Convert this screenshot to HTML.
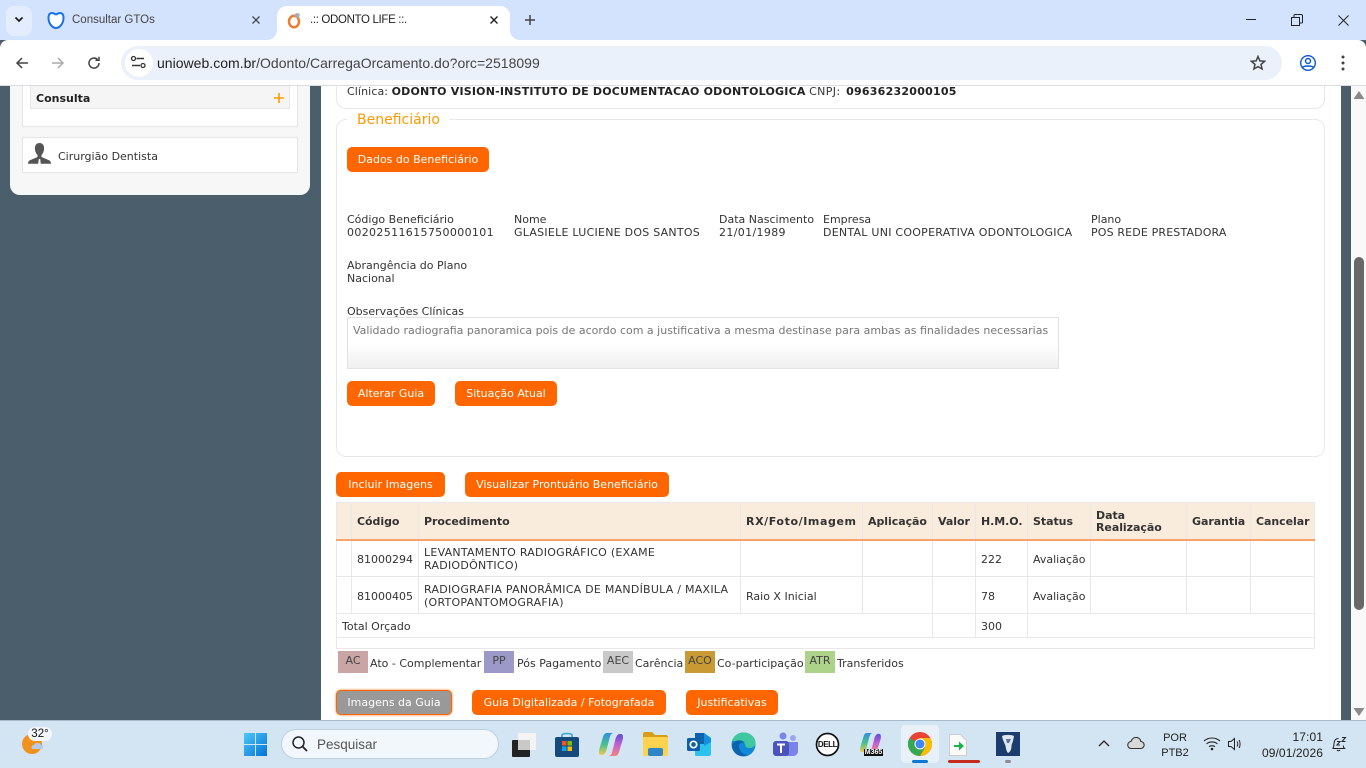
<!DOCTYPE html>
<html lang="pt-BR"><head><meta charset="utf-8"><title>.:: ODONTO LIFE ::.</title>
<style>
html,body{margin:0;padding:0;width:1366px;height:768px;overflow:hidden;background:#4a5e6c}
body{position:relative;font-family:"DejaVu Sans",Verdana,sans-serif;font-size:11px;color:#333}
.a{position:absolute;white-space:nowrap}
.t{position:absolute;white-space:nowrap;line-height:13px}
.u{letter-spacing:.25px}
.n{letter-spacing:.35px}
.b{position:absolute;height:25px;line-height:26px;background:#f60;color:#fff;border-radius:5px;text-align:center}
.box{position:absolute;box-sizing:border-box}
.c{font-family:"Liberation Sans",Arial,sans-serif}
table{position:absolute;left:336px;top:502px;width:979px;border-collapse:collapse;table-layout:fixed;font-size:11px;line-height:13px}
td,th{border:1px solid #e8e8e8;padding:2px 5px 0;text-align:left;vertical-align:middle;box-sizing:border-box;overflow:hidden}
th{background:#faecdc;font-weight:bold;border-bottom:2px solid #f7a26b;white-space:nowrap;height:37px;letter-spacing:-.05px;padding-top:3px;line-height:12px}
.s{position:absolute;top:651px;width:30px;height:22px;text-align:center;line-height:19px;color:#444}
</style></head><body>

<!-- page -->
<div class="box" style="left:10px;top:86px;width:300px;height:109px;background:#f7f7f7;border-radius:0 0 10px 10px"></div>
<div class="box" style="left:22px;top:80px;width:276px;height:47px;background:#fff;border:1px solid #e6e6e6"></div>
<div class="box" style="left:30px;top:80px;width:260px;height:29px;background:#f5f5f5;border:1px solid #e6e6e6"></div>
<div class="t" style="left:36px;top:92px;font-weight:bold;color:#222">Consulta</div>
<svg class="a" style="left:273px;top:92px" width="12" height="12"><path d="M6 1v10M1 6h10" stroke="#f90" stroke-width="1.6"/></svg>
<div class="box" style="left:22px;top:137px;width:276px;height:36px;background:#fff;border:1px solid #e6e6e6"></div>
<svg class="a" style="left:27px;top:142px" width="25" height="25" viewBox="0 0 25 25"><path d="M12.5 1c3 0 4.600 2.200 4.600 5.200 0 3-1.400 5.800-2.600 6.800v2l7 3c1.500.7 2.500 1.600 2.500 3.800H1c0-2.200 1-3.100 2.500-3.800l7-3v-2C9.300 12 7.900 9.200 7.900 6.200 7.900 3.200 9.500 1 12.500 1z" fill="#555"/><path d="M11.800 17h1.400l.6 5-1.300 2-1.300-2z" fill="#fff"/></svg>
<div class="t" style="left:58px;top:150px">Cirurgião Dentista</div>

<div class="box" style="left:321px;top:80px;width:1020px;height:640px;background:#fff"></div>
<div class="box" style="left:336px;top:70px;width:989px;height:39px;border:1px solid #e8e8e8;border-radius:10px"></div>
<div class="t" style="left:347px;top:85px"><span style="letter-spacing:.1px">Clínica:</span> <b style="color:#222;letter-spacing:.2px">ODONTO VISION-INSTITUTO DE DOCUMENTACAO ODONTOLOGICA</b> <span style="letter-spacing:.4px">CNPJ:</span> <b style="color:#222;letter-spacing:.25px;margin-left:2px">09636232000105</b></div>

<div class="box" style="left:336px;top:119px;width:989px;height:338px;border:1px solid #e8e8e8;border-radius:10px"></div>
<div class="a" style="left:347px;top:110px;width:102px;height:18px;background:#fff"></div>
<div class="t" style="left:357px;top:112px;font-size:14px;line-height:16px;color:#f90">Beneficiário</div>
<div class="b" style="left:347px;top:147px;width:142px">Dados do Beneficiário</div>

<div class="t" style="left:347px;top:213px">Código Beneficiário<br><span class="n">00202511615750000101</span></div>
<div class="t" style="left:514px;top:213px">Nome<br><span class="u">GLASIELE LUCIENE DOS SANTOS</span></div>
<div class="t" style="left:719px;top:213px">Data Nascimento<br><span class="n">21/01/1989</span></div>
<div class="t" style="left:823px;top:213px">Empresa<br><span class="u">DENTAL UNI COOPERATIVA ODONTOLOGICA</span></div>
<div class="t" style="left:1091px;top:213px">Plano<br><span style="letter-spacing:.15px">POS REDE PRESTADORA</span></div>
<div class="t" style="left:347px;top:259px">Abrangência do Plano<br>Nacional</div>
<div class="t" style="left:347px;top:305px">Observações Clínicas</div>
<div class="box" style="left:347px;top:317px;width:712px;height:52px;border:1px solid #e2e2e2;background:linear-gradient(#fff 50%,#f0f0f0)"></div>
<div class="t" style="left:353px;top:324px;color:#777">Validado radiografia panoramica pois de acordo com a justificativa a mesma destinase para ambas as finalidades necessarias</div>
<div class="b" style="left:347px;top:381px;width:88px">Alterar Guia</div>
<div class="b" style="left:455px;top:381px;width:102px">Situação Atual</div>

<div class="b" style="left:336px;top:472px;width:109px">Incluir Imagens</div>
<div class="b" style="left:465px;top:472px;width:204px">Visualizar Prontuário Beneficiário</div>

<table>
<colgroup><col style="width:15px"><col style="width:67px"><col style="width:322px"><col style="width:122px"><col style="width:70px"><col style="width:43px"><col style="width:52px"><col style="width:63px"><col style="width:96px"><col style="width:64px"><col style="width:64px"></colgroup>
<tr><th></th><th>Código</th><th>Procedimento</th><th><span style="letter-spacing:.6px">RX/Foto/Imagem</span></th><th>Aplicação</th><th>Valor</th><th>H.M.O.</th><th>Status</th><th>Data<br>Realização</th><th>Garantia</th><th>Cancelar</th></tr>
<tr style="height:37px"><td></td><td>81000294</td><td class="u">LEVANTAMENTO RADIOGRÁFICO (EXAME RADIODÔNTICO)</td><td></td><td></td><td></td><td>222</td><td>Avaliação</td><td></td><td></td><td></td></tr>
<tr style="height:37px"><td></td><td>81000405</td><td class="u">RADIOGRAFIA PANORÂMICA DE MANDÍBULA / MAXILA (ORTOPANTOMOGRAFIA)</td><td>Raio X Inicial</td><td></td><td></td><td>78</td><td>Avaliação</td><td></td><td></td><td></td></tr>
<tr style="height:24px"><td colspan="5">Total Orçado</td><td></td><td>300</td><td colspan="4"></td></tr>
<tr style="height:11px"><td colspan="11" style="font-size:1px;line-height:1px;padding:0"></td></tr>
</table>

<div class="s" style="left:338px;background:#c9a5a5">AC</div>
<div class="t" style="left:370px;top:657px">Ato - Complementar</div>
<div class="s" style="left:484px;background:#9c99c9">PP</div>
<div class="t" style="left:517px;top:657px">Pós Pagamento</div>
<div class="s" style="left:603px;background:#c9c9c9">AEC</div>
<div class="t" style="left:635px;top:657px">Carência</div>
<div class="s" style="left:685px;background:#c99933">ACO</div>
<div class="t" style="left:717px;top:657px">Co-participação</div>
<div class="s" style="left:805px;background:#add28a">ATR</div>
<div class="t" style="left:837px;top:657px">Transferidos</div>

<div class="b" style="left:336px;top:690px;width:116px;background:#999;box-shadow:0 0 0 1px #f60 inset,0 0 2px #f60">Imagens da Guia</div>
<div class="b" style="left:472px;top:690px;width:194px">Guia Digitalizada / Fotografada</div>
<div class="b" style="left:686px;top:690px;width:92px">Justificativas</div>

<!-- page scrollbar -->
<div class="box" style="left:1351px;top:86px;width:15px;height:634px;background:#f9f9f9"></div>
<div class="box" style="left:1354px;top:257px;width:10px;height:353px;background:#686868;border-radius:5px"></div>
<svg class="a" style="left:1353px;top:91px" width="12" height="9"><path d="M6 0l5.500 8H.5z" fill="#8a8a8a"/></svg>
<svg class="a" style="left:1353px;top:708px" width="12" height="9"><path d="M.5 0h11L6 8z" fill="#8a8a8a"/></svg>

<!-- browser chrome -->
<div class="box" style="left:0;top:0;width:1366px;height:40px;background:#d3e3fd"></div>
<div class="box" style="left:0;top:40px;width:1366px;height:46px;background:#fff;border-radius:8px 8px 0 0;border-bottom:1px solid #dadce0"></div>
<div class="box" style="left:6px;top:6px;width:26px;height:30px;background:#e3edfd;border-radius:8px"></div>
<svg class="a" style="left:14px;top:16px" width="10" height="8"><path d="M1.500 1.500L5 5l3.500-3.500" fill="none" stroke="#1f1f1f" stroke-width="1.800"/></svg>
<svg class="a" style="left:47px;top:11px" width="18" height="19" viewBox="0 0 18 19"><path d="M5 2c1.500 0 2.800.8 4 1.500C10.200 2.800 11.500 2 13 2c2.500 0 3.500 2 3.500 5 0 5-3.500 10-7.500 10S1.500 12 1.500 7c0-3 1-5 3.500-5z" fill="#fff" stroke="#1a73e8" stroke-width="2"/></svg>
<div class="a c" style="left:72px;top:13px;font-size:11.500px;line-height:15px;color:#444">Consultar GTOs</div>
<svg class="a" style="left:251px;top:15px" width="10" height="10"><path d="M1.500 1.500l7 7M8.500 1.500l-7 7" stroke="#444" stroke-width="1.300"/></svg>
<div class="box" style="left:277px;top:6px;width:233px;height:36px;background:#fff;border-radius:10px 10px 0 0"></div>
<svg class="a" style="left:267px;top:30px" width="10" height="10"><path d="M0 10a10 10 0 0 0 10-10v10z" fill="#fff"/></svg>
<svg class="a" style="left:510px;top:30px" width="10" height="10"><path d="M0 0a10 10 0 0 0 10 10H0z" fill="#fff"/></svg>
<svg class="a" style="left:285px;top:11px" width="18" height="18" viewBox="0 0 18 18"><ellipse cx="9" cy="10.500" rx="5" ry="5.800" fill="none" stroke="#ee7d31" stroke-width="2.500"/><path d="M9 4.500C10 2 13 1.500 14.500 3c.8 1.500-.5 3.500-2 4.500" fill="#aaa"/></svg>
<div class="a c" style="left:310px;top:13px;font-size:11.500px;line-height:15px;color:#1f1f1f;letter-spacing:-.34px">.:: ODONTO LIFE ::.</div>
<svg class="a" style="left:489px;top:15px" width="10" height="10"><path d="M1.500 1.500l7 7M8.500 1.500l-7 7" stroke="#1f1f1f" stroke-width="1.400"/></svg>
<svg class="a" style="left:524px;top:14px" width="12" height="12"><path d="M6 1v10M1 6h10" stroke="#444" stroke-width="1.500"/></svg>

<svg class="a" style="left:14px;top:55px" width="16" height="16"><path d="M14 8H3M8 3L3 8l5 5" fill="none" stroke="#444" stroke-width="1.500"/></svg>
<svg class="a" style="left:50px;top:55px" width="16" height="16"><path d="M2 8h11M8 3l5 5-5 5" fill="none" stroke="#aaa" stroke-width="1.500"/></svg>
<svg class="a" style="left:86px;top:55px" width="16" height="16"><path d="M13 8a5 5 0 1 1-1.500-3.500M13 1.800v3.500H9.500" fill="none" stroke="#444" stroke-width="1.500"/></svg>
<div class="box" style="left:121px;top:46px;width:1161px;height:34px;background:#ebf1fa;border-radius:17px"></div>
<div class="box" style="left:125px;top:49px;width:28px;height:28px;background:#fff;border-radius:14px"></div>
<svg class="a" style="left:130px;top:54px" width="17" height="17" viewBox="0 0 17 17"><path d="M6.500 4.500H14M2 11.500h8" stroke="#333" stroke-width="1.400"/><circle cx="3.500" cy="4.500" r="2" fill="none" stroke="#333" stroke-width="1.300"/><circle cx="13" cy="11.500" r="2" fill="none" stroke="#333" stroke-width="1.300"/></svg>
<div class="a c" style="left:157px;top:55px;font-size:14px;line-height:16px;color:#444;letter-spacing:.02px"><span style="color:#1f1f1f">unioweb.com.br</span>/Odonto/CarregaOrcamento.do?orc=2518099</div>
<svg class="a" style="left:1250px;top:55px" width="16" height="16" viewBox="0 0 16 16"><path d="M8 1.500l1.900 4.400 4.700.4-3.600 3.100 1.100 4.600L8 11.600l-4.100 2.400L5 9.400 1.400 6.300l4.700-.4z" fill="none" stroke="#444" stroke-width="1.500"/></svg>
<svg class="a" style="left:1299px;top:54px" width="18" height="18" viewBox="0 0 18 18"><circle cx="9" cy="9" r="7.300" fill="none" stroke="#0b57d0" stroke-width="1.400"/><circle cx="9" cy="7" r="2.500" fill="none" stroke="#0b57d0" stroke-width="1.400"/><path d="M3.500 13.500c1.500-2 9.500-2 11 0" fill="none" stroke="#0b57d0" stroke-width="1.400"/></svg>
<svg class="a" style="left:1341px;top:55px" width="4" height="16"><circle cx="2" cy="2" r="1.500" fill="#444"/><circle cx="2" cy="8" r="1.500" fill="#444"/><circle cx="2" cy="14" r="1.500" fill="#444"/></svg>
<svg class="a" style="left:1246px;top:15px" width="11" height="11"><path d="M0 4.500h10" stroke="#222" stroke-width="1"/></svg>
<svg class="a" style="left:1291px;top:14px" width="12" height="12"><path d="M.5 3.500h8v8h-8zM3 3V1.500C3 1 3.500.5 4 .5h6c1 0 1.500.5 1.500 1.500v6c0 .5-.5 1-1 1H9" fill="none" stroke="#222"/></svg>
<svg class="a" style="left:1338px;top:15px" width="11" height="11"><path d="M.5.500l10 10M10.500.5l-10 10" stroke="#222"/></svg>

<!-- taskbar -->
<div class="box" style="left:0;top:720px;width:1366px;height:48px;background:#d3e5f2;border-top:1px solid #a7bbcc"></div>
<svg class="a" style="left:20px;top:726px" width="36" height="32" viewBox="0 0 36 32"><circle cx="12" cy="18" r="10" fill="#f0921e"/><path d="M14 19c1-3 6-3 7 0 3 0 3 4 0 4h-8c-2 0-2-4 1-4z" fill="#b5cbe6"/></svg>
<div class="a c" style="left:28px;top:727px;width:24px;height:14px;background:#f3f7fb;border-radius:7px;font-size:11.500px;line-height:14px;text-align:center;color:#111">32°</div>
<svg class="a" style="left:244px;top:733px" width="23" height="23"><defs><linearGradient id="w" x1="0" y1="0" x2="1" y2="1"><stop offset="0" stop-color="#4fc8fb"/><stop offset="1" stop-color="#0273d4"/></linearGradient><linearGradient id="cl" x1="0" y1="0" x2="0" y2="1"><stop offset="0" stop-color="#2d8fe0"/><stop offset=".55" stop-color="#4cc38a"/><stop offset="1" stop-color="#f4c84a"/></linearGradient><linearGradient id="cr" x1="0" y1="0" x2="0" y2="1"><stop offset="0" stop-color="#5a4fd6"/><stop offset=".5" stop-color="#c562d0"/><stop offset="1" stop-color="#f4847a"/></linearGradient></defs><path d="M0 0h11v11H0zM12 0h11v11H12zM0 12h11v11H0zM12 12h11v11H12z" fill="url(#w)"/></svg>
<div class="box" style="left:281px;top:729px;width:218px;height:30px;background:#f2f7fc;border:1px solid #bdd0e0;border-radius:15px"></div>
<svg class="a" style="left:291px;top:735px" width="17" height="17"><circle cx="7.500" cy="7.500" r="5.500" fill="none" stroke="#222" stroke-width="1.500"/><path d="M11.500 11.500l4.500 4.500" stroke="#222" stroke-width="1.800"/></svg>
<div class="a c" style="left:317px;top:737px;font-size:13.500px;line-height:16px;color:#555">Pesquisar</div>

<svg class="a" style="left:512px;top:733px" width="24" height="24"><rect x="6" y="0" width="18" height="17" rx="1" fill="#f4f4f4"/><rect x="0" y="7" width="18" height="17" rx="1" fill="#222"/><rect x="6" y="7" width="12" height="10" fill="#c9c9c9"/></svg>
<svg class="a" style="left:555px;top:732px" width="24" height="25"><path d="M7 6V3c0-2 10-2 10 0v3" fill="none" stroke="#38a5d8" stroke-width="1.600"/><rect y="5" width="24" height="20" rx="2" fill="#164a7c"/><path d="M7 9h4.500v4.500H7z" fill="#f35325"/><path d="M12.500 9H17v4.500h-4.500z" fill="#81bc06"/><path d="M7 14.500h4.500V19H7z" fill="#05a6f0"/><path d="M12.500 14.500H17V19h-4.500z" fill="#ffba08"/></svg>
<svg class="a" style="left:599px;top:733px" width="24" height="23" viewBox="0 0 24 23"><path d="M8 0h6.500c-2 .3-3 1.500-3.500 3.500L8 15c-.7 4-2.500 7-5 7H2c-2 0-2.500-3-1.500-6.500L4 4c.7-2.500 2-4 4-4z" fill="url(#cl)"/><path d="M16 23H9.500c2-.3 3-1.500 3.500-3.500L16 8c.7-4 2.500-7 5-7h1c2 0 2.500 3 1.500 6.500L20 19c-.7 2.500-2 4-4 4z" fill="url(#cr)"/></svg>
<svg class="a" style="left:643px;top:732px" width="25" height="24"><path d="M0 2c0-1 .5-2 2-2h7l3 3h11c1 0 2 1 2 2v4H0z" fill="#d49e17"/><rect y="5" width="25" height="19" rx="1.500" fill="#fcd34f"/><rect x="5" y="16" width="15" height="8" rx="2" fill="#2f85c6"/></svg>
<svg class="a" style="left:687px;top:732px" width="24" height="24"><path d="M8 1h9l7 5v16c0 1-1 2-2 2H9c-1 0-1-1-1-2z" fill="#2bc3ee"/><path d="M8 1h9v11H8z" fill="#0a64ad"/><path d="M17 1l7 5v4l-7 4z" fill="#1490df"/><rect y="6" width="13" height="13" rx="1.500" fill="#0f5fa8"/><circle cx="6.500" cy="12.500" r="3.200" fill="none" stroke="#fff" stroke-width="1.700"/></svg>
<svg class="a" style="left:731px;top:732px" width="25" height="25" viewBox="0 0 25 25"><circle cx="12.500" cy="12.500" r="12" fill="#1089d6"/><path d="M1 9C3 2 10 .5 13 .5c7 0 11.500 5.500 11.500 10 0 4-3 5.500-6 5.500-3.500 0-5-2-4-4-3-2-7-3-13.500-3z" fill="#3fc7a0"/><path d="M8 14c0 5 4 9 9 9-8 3-15-1-16-9 0-5 9-8 13-3-3-1-6 0-6 3z" fill="#0c62ad"/></svg>
<svg class="a" style="left:773px;top:732px" width="25" height="25"><circle cx="10" cy="4" r="3.500" fill="#7b83eb"/><circle cx="20" cy="6" r="3" fill="#9ea4f0"/><path d="M14 10h11v9c0 3-2 5-5 5h-6z" fill="#7b83eb"/><rect y="9" width="16" height="15" rx="3" fill="#4b53bc"/><path d="M4 12.500h8M8 12.500V21" stroke="#fff" stroke-width="2"/></svg>
<svg class="a" style="left:815px;top:732px" width="25" height="25"><circle cx="12.500" cy="12.500" r="11" fill="#fff" stroke="#111" stroke-width="1.700"/></svg>
<div class="a c" style="left:815px;top:740px;width:25px;text-align:center;font-size:8px;line-height:9px;font-weight:bold;color:#111;letter-spacing:-.4px">DELL</div>
<svg class="a" style="left:859px;top:733px" width="23" height="20" viewBox="0 0 24 23"><path d="M8 0h6.500c-2 .3-3 1.500-3.500 3.500L8 15c-.7 4-2.500 7-5 7H2c-2 0-2.500-3-1.500-6.500L4 4c.7-2.500 2-4 4-4z" fill="url(#cl)"/><path d="M16 23H9.500c2-.3 3-1.500 3.500-3.500L16 8c.7-4 2.500-7 5-7h1c2 0 2.500 3 1.500 6.500L20 19c-.7 2.500-2 4-4 4z" fill="url(#cr)"/></svg>
<div class="a c" style="left:864px;top:749px;width:19px;height:7px;background:#111;color:#fff;font-size:7px;line-height:7px;font-weight:bold;text-align:center">M365</div>

<div class="box" style="left:901px;top:725px;width:38px;height:38px;background:#e8f0f8;border-radius:4px"></div>
<svg class="a" style="left:908px;top:732px" width="24" height="24" viewBox="0 0 24 24"><circle cx="12" cy="12" r="12" fill="#ea4335"/><path d="M12 12L1.600 6A12 12 0 0 0 12 24l5.200-9z" fill="#34a853"/><path d="M12 6h10.400A12 12 0 0 1 12 24l5.200-9z" fill="#fbbc04"/><circle cx="12" cy="12" r="5.500" fill="#fff"/><circle cx="12" cy="12" r="4.500" fill="#4285f4"/></svg>
<div class="box" style="left:912px;top:760px;width:16px;height:3px;background:#0a78d4;border-radius:2px"></div>
<svg class="a" style="left:949px;top:734px" width="18" height="22"><path d="M.5.500h11l6 6v15H.5z" fill="#fafafa" stroke="#ccc"/><path d="M5 11h5V7.500l5 4.500-5 4.500V13H5z" fill="#19b24b"/></svg>
<div class="box" style="left:948px;top:760px;width:32px;height:3px;background:#c42b1c;border-radius:2px"></div>
<svg class="a" style="left:996px;top:732px" width="24" height="24"><rect width="24" height="24" fill="#1d3c6e"/><path d="M6 4c3-1.500 9-1.500 12 0l-1 5c-.5 2-1.500 3-1.500 5 0 3-1 6-3.500 7-1.500-1.500-2-4-2.500-7-.5-2-3-6-3.500-10z" fill="#dfe6ee"/><path d="M10 7h5l-2 4h-2z" fill="#5c7496"/></svg>
<div class="box" style="left:1005px;top:760px;width:6px;height:3px;background:#8a8f96;border-radius:2px"></div>

<svg class="a" style="left:1098px;top:739px" width="12" height="9"><path d="M1 7l5-5 5 5" fill="none" stroke="#222" stroke-width="1.300"/></svg>
<svg class="a" style="left:1127px;top:736px" width="18" height="14"><path d="M4.500 12.500a3.500 3.500 0 0 1-.5-7C5 2.500 7.500 1 10 1.500c2 .4 3.500 2 3.800 4a3.500 3.500 0 0 1-.3 7z" fill="#d9d9d9" stroke="#333" stroke-width="1.100"/></svg>
<div class="a c" style="left:1155px;top:731px;width:40px;text-align:center;font-size:11px;line-height:15px;color:#222">POR<br>PTB2</div>
<svg class="a" style="left:1203px;top:736px" width="18" height="15" viewBox="0 0 18 15"><path d="M1 5c4.500-4 11.500-4 16 0M3.500 8c3-2.700 8-2.700 11 0M6 10.700c1.700-1.300 4.300-1.300 6 0" fill="none" stroke="#222" stroke-width="1.100"/><circle cx="9" cy="13" r="1.300" fill="#222"/></svg>
<svg class="a" style="left:1228px;top:737px" width="16" height="14" viewBox="0 0 16 14"><path d="M.5 4.500h2.500L6.500 1.500v11L3 9.500H.5z" fill="none" stroke="#222"/><path d="M9 4.500c1 1.500 1 3.500 0 5M11 3c1.500 2.300 1.500 5.700 0 8" fill="none" stroke="#222"/></svg>
<div class="a c" style="left:1251px;top:729px;width:72px;text-align:right;font-size:12px;line-height:16px;color:#222;letter-spacing:.1px">17:01<br>09/01/2026</div>
<svg class="a" style="left:1331px;top:736px" width="16" height="16" viewBox="0 0 16 16"><path d="M1.500 12.500c1.500-1 1.500-3 1.500-5 0-3 1.800-5 4.500-5M1.500 12.500h12c-.8-.6-1.200-1.600-1.300-3" fill="none" stroke="#222"/><path d="M6 14c.5 1 2.500 1 3 0" fill="none" stroke="#222"/><path d="M6 5.500h3L6 9h3M11 1.500h3.500L11 5.500h3.500" fill="none" stroke="#222"/></svg>
</body></html>
